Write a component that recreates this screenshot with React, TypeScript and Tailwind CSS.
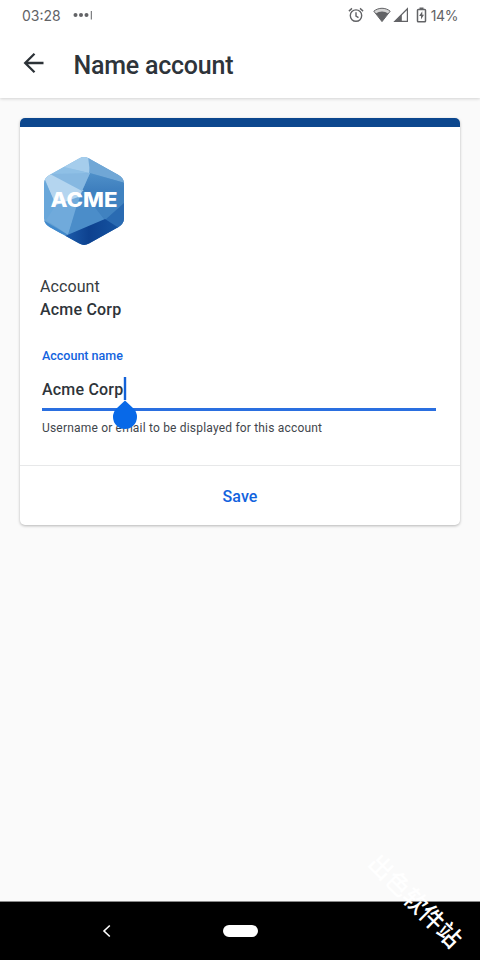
import React from "react"

function StatusBar() {
  return (
    <div className="flex h-8 shrink-0 items-center pl-[22px] pr-[22px] text-[#626366]">
      <span className="font-['Inter',sans-serif] text-[14px] leading-8">03:28</span>
      <svg className="ml-3 mt-[-2px]" width="20" height="12" viewBox="0 0 20 12" fill="currentColor">
        <circle cx="2.5" cy="6" r="2" />
        <circle cx="8" cy="6" r="2" />
        <circle cx="13.5" cy="6" r="2" />
        <rect x="17.8" y="2" width="1" height="8.5" />
      </svg>
      <div className="ml-auto flex items-center">
        <svg className="mt-[-2px]" width="16" height="16" viewBox="0 0 16 16" fill="none" stroke="currentColor" strokeWidth="1.4">
          <circle cx="8" cy="8.6" r="5.7" />
          <path d="M8 5.2v3.8l2.5 1.6M0.9 4.1 4 1.4M15.1 4.1 12 1.4" />
        </svg>
        <svg className="ml-[9px] mt-[-2px]" width="18" height="16" viewBox="0 0 18 16">
          <path d="M0.8 4.2C5.6.3 12.4.3 17.2 4.2L9 14.6Z" fill="#d4d4d4" />
          <path d="M0.8 4.2C5.6.3 12.4.3 17.2 4.2L9 14.6Z" fill="none" stroke="currentColor" strokeWidth="1" />
          <path d="M2.8 6.6c3.6-2.9 8.8-2.9 12.4 0L9 14.6Z" fill="currentColor" />
        </svg>
        <svg className="ml-[2px] mt-[-2px]" width="16" height="16" viewBox="0 0 16 16">
          <path d="M14.4 1.8V14.4H1.8Z" fill="none" stroke="currentColor" strokeWidth="1.2" />
          <path d="M8.8 7.4V14.4H1.8Z" fill="currentColor" />
        </svg>
        <svg className="ml-[7px] mt-[-2px]" width="11" height="16" viewBox="0 0 11 16">
          <path d="M3.5 0.5h4v1.7h-4z" fill="currentColor" />
          <rect x="1.5" y="2.5" width="8" height="12.2" rx="0.8" fill="none" stroke="currentColor" strokeWidth="1.5" />
          <path d="M6.3 4.3 3.1 9.1h1.9v3.5l3-4.8H6.3Z" fill="currentColor" />
        </svg>
        <span className="ml-1 font-['Inter',sans-serif] text-[14px] leading-8 tracking-[-0.4px]">14%</span>
      </div>
    </div>
  )
}

function Header() {
  return (
    <header className="relative z-10 h-[98px] shrink-0 bg-white shadow-[0_1px_3px_rgba(0,0,0,0.16)]">
      <StatusBar />
      <div className="flex h-[66px] items-center pl-[23px]">
        <svg className="mt-[-5px]" width="22" height="22" viewBox="0 0 22 22" fill="none" stroke="#2c3237" strokeWidth="2.3">
          <path d="M20.5 11H2.5M11.5 1.7 2.2 11 11.5 20.3" />
        </svg>
        <h1 className="ml-[28.5px] mt-[2px] text-[25px] font-medium leading-8 tracking-[-0.23px] text-[#2e343a]">Name account</h1>
      </div>
    </header>
  )
}

function AcmeLogo() {
  return (
    <svg width="82" height="90" viewBox="0 0 82 90">
      <defs>
        <linearGradient id="base" x1="0" y1="0" x2="1" y2="1">
          <stop offset="0" stopColor="#a9d0ee" />
          <stop offset="0.5" stopColor="#5999cf" />
          <stop offset="1" stopColor="#1a559f" />
        </linearGradient>
        <linearGradient id="shade" x1="0" y1="0" x2="1" y2="0">
          <stop offset="0" stopColor="#1d5cab" />
          <stop offset="0.4" stopColor="#0d418f" />
          <stop offset="1" stopColor="#1757a4" />
        </linearGradient>
        <linearGradient id="right" x1="0" y1="0" x2="0" y2="1">
          <stop offset="0" stopColor="#4f90c9" />
          <stop offset="1" stopColor="#2565ae" />
        </linearGradient>
        <clipPath id="hex">
          <path d="M36 2.4Q41 -0.5 46 2.4L75.5 19Q81 22 81 28V62Q81 68 75.5 71L46 87.6Q41 90.5 36 87.6L6.5 71Q1 68 1 62V28Q1 22 6.5 19Z" />
        </clipPath>
      </defs>
      <g clipPath="url(#hex)">
        <path d="M0 0H82V90H0Z" fill="url(#base)" />
        <path d="M0 20 17 10 46 17 0 24Z" fill="#8fc0e6" />
        <path d="M17 10 41 0 49 0 46 17Z" fill="#a5cdec" />
        <path d="M45 0 82 19V27L47 17Z" fill="#70a7d6" />
        <path d="M47 17 82 27V60L39 35Z" fill="url(#right)" />
        <path d="M0 18 7 17 41 35 38 50 12 49Z" fill="#b4d5ef" />
        <path d="M7 18 47 17 39 35Z" fill="#86b8e1" />
        <path d="M0 20 13 49 3 66 0 60Z" fill="#69a7da" />
        <path d="M13 49 38 40 25 79 3 64Z" fill="#70aadb" />
        <path d="M39 35 62 64 25 79 33 52Z" fill="#4b8dc9" />
        <path d="M39 35 82 33V50L62 64Z" fill="#4082c0" />
        <path d="M82 46V76L62 64Z" fill="#2a6bb2" />
        <path d="M0 64 25 79 0 74Z" fill="#4089cc" />
        <path d="M22 80 62 63 82 76 41 90Z" fill="url(#shade)" />
      </g>
      <text x="41" y="50.5" textAnchor="middle" textLength="67" lengthAdjust="spacingAndGlyphs" fill="white" className="font-['Inter',sans-serif] text-[19.5px] font-extrabold">ACME</text>
    </svg>
  )
}

function CursorHandle() {
  return (
    <svg className="absolute left-[70px] top-[1px]" width="26" height="54" viewBox="0 0 26 54" fill="#0869e8">
      <rect x="11.8" y="0" width="2.4" height="23" fill="#1261d8" />
      <path d="M13 23.5 21.5 31.5A12 12 0 1 1 4.5 31.5Z" />
    </svg>
  )
}

function AccountCard() {
  return (
    <section className="h-[407px] overflow-hidden rounded-[5px] bg-white shadow-[0_1px_3px_rgba(0,0,0,0.28)]">
      <div className="h-[9px] bg-[#0c478e]" />
      <div className="h-[339px] border-b border-[#e7e8e9] px-5 pt-[29px]">
        <div className="pl-[3px]">
          <AcmeLogo />
        </div>
        <div className="mt-[29px] text-[16px] leading-[23px] text-[#363b40]">
          <p className="tracking-[0.08px]">Account</p>
          <p className="font-medium tracking-[0.2px] text-[#2e343a]">Acme Corp</p>
        </div>
        <div className="ml-[2px] mr-1 mt-[27px]">
          <label className="block text-[12.5px] font-medium leading-4 text-[#1263de]">Account name</label>
          <div className="relative mt-3 h-[35px] border-b-[3px] border-[#2a6fe0]">
            <span className="block pt-[2px] text-[16px] font-medium leading-6 tracking-[0.2px] text-[#2e343a]">Acme Corp</span>
            <CursorHandle />
          </div>
          <p className="mt-[8px] text-[12px] leading-[19px] tracking-[0.19px] text-[#3f464c]">Username or email to be displayed for this account</p>
        </div>
      </div>
      <button className="flex h-[59px] w-full items-center justify-center pt-[3px] text-[16px] font-medium tracking-[0.1px] text-[#1263de]">Save</button>
    </section>
  )
}

function NavigationBar() {
  return (
    <nav className="relative flex h-[59px] shrink-0 items-center border-t border-[#8a8a8a] bg-black">
      <svg className="ml-[101px]" width="11" height="16" viewBox="0 0 11 16" fill="none" stroke="white" strokeWidth="1.6">
        <path d="M8.8 2.5 3 8l5.8 5.5" />
      </svg>
      <div className="ml-[111px] h-[12px] w-[35px] rounded-full bg-white" />
      <span className="absolute left-[353px] top-[-17px] w-[126px] rotate-[45deg] whitespace-nowrap text-center font-['Noto_Sans_CJK_SC',sans-serif] text-[24px] font-medium leading-[30px] text-white">出色软件站</span>
    </nav>
  )
}

export default function App() {
  return (
    <div className="flex h-[960px] w-[480px] flex-col overflow-hidden bg-[#fafafa] font-['Roboto',sans-serif]">
      <Header />
      <main className="flex-1 px-5 pt-5">
        <AccountCard />
      </main>
      <NavigationBar />
    </div>
  )
}
